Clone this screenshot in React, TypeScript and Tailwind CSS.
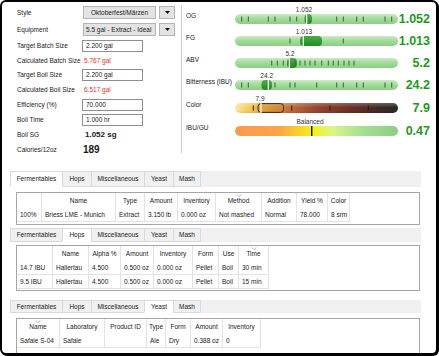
import React from "react";

type GreenProps = { ticks: number[]; zone: [number, number]; marker: number };

function GreenBar({ ticks, zone, marker }: GreenProps) {
  return (
    <svg width="163" height="10" viewBox="0 0 163 10" className="block">
      <defs>
        <linearGradient id="gbar" x1="0" y1="0" x2="0" y2="1">
          <stop offset="0" stopColor="#c9ecc3" />
          <stop offset="0.45" stopColor="#a2db9b" />
          <stop offset="1" stopColor="#8bce84" />
        </linearGradient>
        <linearGradient id="gzone" x1="0" y1="0" x2="0" y2="1">
          <stop offset="0" stopColor="#4cab48" />
          <stop offset="1" stopColor="#238a25" />
        </linearGradient>
      </defs>
      <rect x="0" y="0" width="163" height="10" rx="5" fill="url(#gbar)" />
      <rect x={zone[0]} y="0" width={zone[1] - zone[0]} height="10" rx="4" fill="url(#gzone)" />
      {ticks.map((t, i) => (
        <rect key={i} x={t - 0.5} y="2.5" width="1" height="5" fill="#3f5f42" />
      ))}
      <rect x={marker - 0.6} y="0" width="1.2" height="10" fill="#ffffff" />
    </svg>
  );
}

function ColorBar() {
  return (
    <svg width="163" height="10" viewBox="0 0 163 10" className="block">
      <defs>
        <linearGradient id="cbar" x1="0" y1="0" x2="1" y2="0">
          <stop offset="0" stopColor="#fbe9a6" />
          <stop offset="0.1" stopColor="#f3c650" />
          <stop offset="0.22" stopColor="#d9953c" />
          <stop offset="0.35" stopColor="#b9683a" />
          <stop offset="0.5" stopColor="#94422c" />
          <stop offset="0.7" stopColor="#6b2d22" />
          <stop offset="0.88" stopColor="#3f2622" />
          <stop offset="1" stopColor="#262626" />
        </linearGradient>
        <linearGradient id="cshade" x1="0" y1="0" x2="0" y2="1">
          <stop offset="0" stopColor="#ffffff" stopOpacity="0.25" />
          <stop offset="0.5" stopColor="#ffffff" stopOpacity="0" />
          <stop offset="1" stopColor="#000000" stopOpacity="0.08" />
        </linearGradient>
      </defs>
      <rect x="0" y="0" width="163" height="10" rx="5" fill="url(#cbar)" />
      <rect x="0" y="0" width="163" height="10" rx="5" fill="url(#cshade)" />
      {[18.3, 56.7, 95, 133.3].map((t, i) => (
        <rect key={i} x={t - 0.5} y="2.5" width="1" height="5" fill="#2b1a12" />
      ))}
      <rect x="23" y="0.6" width="25.5" height="8.8" rx="3" fill="#d08f35" fillOpacity="0.35" stroke="#3a2a1e" strokeWidth="1" />
      <rect x="25.4" y="0" width="1.2" height="10" fill="#ffffff" />
    </svg>
  );
}

function BalanceBar() {
  return (
    <svg width="163" height="10" viewBox="0 0 163 10" className="block">
      <defs>
        <linearGradient id="bbar" x1="0" y1="0" x2="1" y2="0">
          <stop offset="0" stopColor="#f99a54" />
          <stop offset="0.28" stopColor="#fba648" />
          <stop offset="0.42" stopColor="#f8dc22" />
          <stop offset="0.5" stopColor="#eef52a" />
          <stop offset="0.6" stopColor="#d9f58a" />
          <stop offset="0.78" stopColor="#a6df95" />
          <stop offset="1" stopColor="#8ccd86" />
        </linearGradient>
      </defs>
      <rect x="0" y="0" width="163" height="10" rx="5" fill="url(#bbar)" />
      <rect x="76" y="0" width="1.4" height="10" fill="#111111" />
    </svg>
  );
}

type GaugeRowProps = {
  label: string;
  value: string;
  tag: string;
  tagX: number;
  h: string;
  children: React.ReactNode;
};

function GaugeRow({ label, value, tag, tagX, h, children }: GaugeRowProps) {
  return (
    <div className={`flex ${h}`}>
      <div className="w-[49px] pt-[6px] leading-[8px] whitespace-nowrap">{label}</div>
      <div className="w-[163px] flex flex-col">
        <div className="relative h-[8px]">
          <div
            className="absolute top-0 leading-[8px] whitespace-nowrap -translate-x-1/2 text-[#333]"
            style={{ left: tagX }}
          >
            {tag}
          </div>
        </div>
        {children}
      </div>
      <div className="w-[32px] pt-[6px] text-right font-bold text-[12.5px] leading-[14px] text-[#1d9a1d]">
        {value}
      </div>
    </div>
  );
}

function FormRow({ h, label, children }: { h: string; label: string; children?: React.ReactNode }) {
  return (
    <div className={`flex items-center ${h}`}>
      <div className="w-[65px] whitespace-nowrap leading-[8px]">{label}</div>
      {children}
    </div>
  );
}

function Input({ text }: { text: string }) {
  return (
    <div className="w-[61px] h-[12px] border border-[#8f8f8f] bg-white pl-[3px] flex items-center leading-[8px]">
      {text}
    </div>
  );
}

function DropBtn() {
  return (
    <div className="ml-[3px] w-[16px] h-[13px] border border-[#b4b4b4] bg-[#e3e3e3] flex items-center justify-center">
      <svg width="5" height="3" viewBox="0 0 5 3">
        <path d="M0 0 L5 0 L2.5 3 Z" fill="#111" />
      </svg>
    </div>
  );
}

const TABS: [string, string][] = [
  ["Fermentables", "w-[53px]"],
  ["Hops", "w-[30px]"],
  ["Miscellaneous", "w-[54px]"],
  ["Yeast", "w-[30px]"],
  ["Mash", "w-[28px]"],
];

function Tabs({ active, h }: { active: string; h: string }) {
  return (
    <div className={`flex w-[411px] bg-[#f0f0f0] ${h}`}>
      {TABS.map(([n, w], i) => (
        <div
          key={n}
          className={`${w} ${i > 0 ? "-ml-px" : ""} flex items-center justify-center border border-[#d9d9d9] leading-[8px] ${
            n === active ? "bg-white border-b-white relative z-10" : "bg-[#f0f0f0]"
          }`}
        >
          {n}
        </div>
      ))}
    </div>
  );
}

function SortMark() {
  return (
    <svg width="6" height="3" viewBox="0 0 6 3" className="absolute top-[1px] left-1/2 -translate-x-1/2">
      <path d="M0.5 0.3 L3 2.6 L5.5 0.3" fill="none" stroke="#a8a8a8" strokeWidth="0.8" />
    </svg>
  );
}

type TableProps = {
  widths: string[];
  headers: string[];
  rows: string[][];
  sortIdx: number;
  h: string;
};

function Table({ widths, headers, rows, sortIdx, h }: TableProps) {
  return (
    <div className={`ml-[6px] w-[404px] border border-[#a6a6a6] bg-white ${h}`}>
      <div className="flex h-[15px]">
        {headers.map((t, i) => (
          <div
            key={i}
            className={`${widths[i]} relative border-r border-[#e3e3e3] flex items-center justify-center whitespace-nowrap leading-[8px]`}
          >
            {i === sortIdx && <SortMark />}
            {t}
          </div>
        ))}
      </div>
      {rows.map((r, ri) => (
        <div key={ri} className="flex h-[14px]">
          {r.map((t, i) => (
            <div
              key={i}
              className={`${widths[i]} border-r border-b border-[#e3e3e3] flex items-center pl-[3px] whitespace-nowrap leading-[8px]`}
            >
              {t}
            </div>
          ))}
        </div>
      ))}
    </div>
  );
}

export default function App() {
  return (
    <div className="w-[439px] h-[356px] bg-white font-['Liberation_Sans',Arial,sans-serif] text-[6.5px] text-[#1a1a1a]">
      <div className="w-[438px] h-[355px] border-2 border-black rounded-[6px] overflow-hidden bg-white shadow-[1px_1px_0_#000]">
        <div className="flex h-[158px]">
          <div className="w-[179px] pl-[15px] pt-[2px]">
            <FormRow h="h-[17px]" label="Style">
              <div className="ml-[1px] w-[73px] h-[13px] border border-[#b4b4b4] bg-[#e3e3e3] flex items-center justify-center leading-[8px] whitespace-nowrap">
                Oktoberfest/Märzen
              </div>
              <DropBtn />
            </FormRow>
            <FormRow h="h-[17px]" label="Equipment">
              <div className="ml-[1px] w-[73px] h-[13px] border border-[#b4b4b4] bg-[#e3e3e3] flex items-center pl-[2px] leading-[8px] whitespace-nowrap">
                5.5 gal - Extract - Ideal
              </div>
              <DropBtn />
            </FormRow>
            <FormRow h="h-[15px]" label="Target Batch Size">
              <Input text="2.200 gal" />
            </FormRow>
            <FormRow h="h-[15px]" label="Calculated Batch Size">
              <div className="ml-[2px] text-[#e8302a] leading-[8px]">5.767 gal</div>
            </FormRow>
            <FormRow h="h-[14px]" label="Target Boil Size">
              <Input text="2.200 gal" />
            </FormRow>
            <FormRow h="h-[15px]" label="Calculated Boil Size">
              <div className="ml-[2px] text-[#e8302a] leading-[8px]">6.517 gal</div>
            </FormRow>
            <FormRow h="h-[15px]" label="Efficiency (%)">
              <Input text="70.000" />
            </FormRow>
            <FormRow h="h-[15px]" label="Boil Time">
              <Input text="1.000 hr" />
            </FormRow>
            <FormRow h="h-[15px]" label="Boil SG">
              <div className="ml-[3px] font-bold text-[8px] leading-[10px]">1.052 sg</div>
            </FormRow>
            <FormRow h="h-[15px]" label="Calories/12oz">
              <div className="ml-[1px] font-bold text-[10px] leading-[12px]">189</div>
            </FormRow>
          </div>
          <div className="mt-[3px] h-[148px] w-px bg-[#cdcdcd]" />
          <div className="pl-[4px] pt-[4px]">
            <GaugeRow h="h-[22px]" label="OG" value="1.052" tag="1.052" tagX={69}>
              <GreenBar
                ticks={[6.7, 13.3, 33.3, 40, 55, 61.7, 101.7, 108.3, 121.7, 128.3, 150, 156.7]}
                zone={[69.5, 77]}
                marker={71.7}
              />
            </GaugeRow>
            <GaugeRow h="h-[22px]" label="FG" value="1.013" tag="1.013" tagX={69}>
              <GreenBar ticks={[55, 108.3]} zone={[65, 87]} marker={68.3} />
            </GaugeRow>
            <GaugeRow h="h-[22px]" label="ABV" value="5.2" tag="5.2" tagX={55}>
              <GreenBar
                ticks={[36.7, 42.3, 48.3, 53.3, 60, 65, 70, 75, 80, 86.7, 93.3, 98.3, 103.3, 109, 114, 119]}
                zone={[52, 62]}
                marker={54.3}
              />
            </GaugeRow>
            <GaugeRow h="h-[23px]" label="Bitterness (IBU)" value="24.2" tag="24.2" tagX={31.7}>
              <GreenBar
                ticks={[6.7, 13.3, 40, 55, 60, 81.7, 101.7, 108.3, 121.7, 128.3, 150, 156.7]}
                zone={[26.5, 37]}
                marker={33.3}
              />
            </GaugeRow>
            <GaugeRow h="h-[23px]" label="Color" value="7.9" tag="7.9" tagX={25}>
              <ColorBar />
            </GaugeRow>
            <GaugeRow h="h-[22px]" label="IBU/GU" value="0.47" tag="Balanced" tagX={75}>
              <BalanceBar />
            </GaugeRow>
          </div>
        </div>

        <div className="ml-[8px]">
          <div className="mt-[11px]">
            <Tabs active="Fermentables" h="h-[16px]" />
            <div className="h-[5px]" />
            <Table
              h="h-[33px]"
              widths={["w-[25px]", "w-[74px]", "w-[29px]", "w-[33px]", "w-[38px]", "w-[46px]", "w-[35px]", "w-[31px]", "w-[22px]"]}
              headers={["", "Name", "Type", "Amount", "Inventory", "Method", "Addition", "Yield %", "Color"]}
              rows={[["100%", "Briess LME - Munich", "Extract", "3.150 lb", "0.000 oz", "Not mashed", "Normal", "78.000", "8 srm"]]}
              sortIdx={5}
            />
          </div>
          <div className="mt-[3px]">
            <Tabs active="Hops" h="h-[14px]" />
            <div className="h-[3px]" />
            <Table
              h="h-[46px]"
              widths={["w-[36px]", "w-[36px]", "w-[32px]", "w-[33px]", "w-[39px]", "w-[26px]", "w-[20px]", "w-[30px]"]}
              headers={["", "Name", "Alpha %", "Amount", "Inventory", "Form", "Use", "Time"]}
              rows={[
                ["14.7 IBU", "Hallertau", "4.500", "0.500 oz", "0.000 oz", "Pellet", "Boil", "30 min"],
                ["9.5 IBU", "Hallertau", "4.500", "0.500 oz", "0.000 oz", "Pellet", "Boil", "15 min"],
              ]}
              sortIdx={7}
            />
          </div>
          <div className="mt-[9px]">
            <Tabs active="Yeast" h="h-[13px]" />
            <div className="h-[5px]" />
            <Table
              h="h-[40px]"
              widths={["w-[43px]", "w-[45px]", "w-[42px]", "w-[19px]", "w-[25px]", "w-[32px]", "w-[38px]"]}
              headers={["Name", "Laboratory", "Product ID", "Type", "Form", "Amount", "Inventory"]}
              rows={[["Safale S-04", "Safale", "", "Ale", "Dry", "0.388 oz", "0"]]}
              sortIdx={0}
            />
          </div>
        </div>
      </div>
    </div>
  );
}
